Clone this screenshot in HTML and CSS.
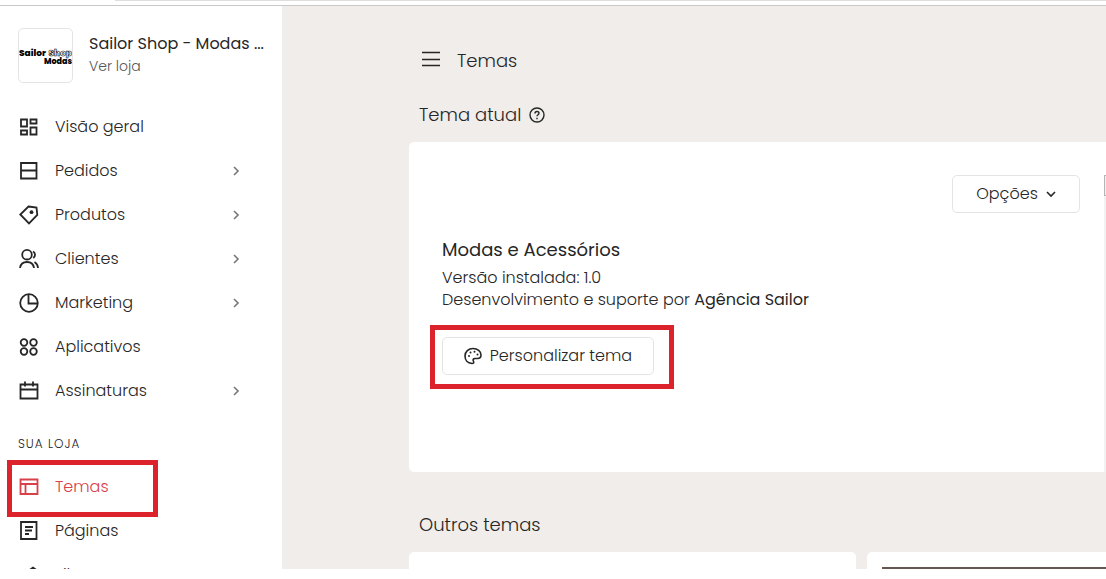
FILE: index.html
```html
<!DOCTYPE html>
<html lang="pt-BR">

<head>
  <meta charset="utf-8">
  <title>Temas</title>
  <link rel="stylesheet" href="styles.css">
</head>

<body>
  <div class="topbar"></div>
  <div class="page">
    <!-- menu lateral -->
    <aside class="sidebar">
      <div class="store">
        <svg class="store-logo" viewBox="0 0 53 53" role="img" aria-label="Sailor Shop Modas">
          <text x="0" y="27" class="logo-text">Sailor</text>
          <text x="53" y="27" class="logo-text logo-outline logo-end">Shop</text>
          <text x="53" y="35" class="logo-text logo-small logo-end">Modas</text>
        </svg>
        <div class="store-info">
          <div class="store-name">Sailor Shop - Modas ...</div>
          <a class="store-link" href="#">Ver loja</a>
        </div>
      </div>

      <nav class="menu">
        <a class="item" href="#">
          <svg class="icon" viewBox="0 0 20 20"><path d="M2 2.500h6v7H2zM11.500 2.500h6v4h-6zM2 13.500h6v4H2zM11.500 10.500h6v7h-6z"/></svg>
          <span>Visão geral</span>
        </a>
        <a class="item" href="#">
          <svg class="icon" viewBox="0 0 20 20"><path d="M2 2h15.500v15.500H2zM2 9.500h15.500"/></svg>
          <span>Pedidos</span>
          <svg class="arrow" viewBox="0 0 10 10"><path d="M3 1l4 4-4 4"/></svg>
        </a>
        <a class="item" href="#">
          <svg class="icon" viewBox="0 0 20 20"><path d="M9.500 1.500L17.500 2.500l.8 7.500-8.300 8.500-8.700-9z"/><circle class="dot" cx="12.500" cy="7.200" r="1.900"/></svg>
          <span>Produtos</span>
          <svg class="arrow" viewBox="0 0 10 10"><path d="M3 1l4 4-4 4"/></svg>
        </a>
        <a class="item" href="#">
          <svg class="icon" viewBox="0 0 20 20"><circle cx="8" cy="5.700" r="4.800"/><path d="M1 19c.6-4.500 3.300-6 7-6s6.400 1.500 7 6M14 2.500c2.500 1.300 2.800 4.600.3 6.500M15.500 13c2 1.200 3.300 3 3.500 6"/></svg>
          <span>Clientes</span>
          <svg class="arrow" viewBox="0 0 10 10"><path d="M3 1l4 4-4 4"/></svg>
        </a>
        <a class="item" href="#">
          <svg class="icon" viewBox="0 0 20 20"><circle cx="10" cy="10" r="8.800"/><path d="M9.500 1v9.500H19"/></svg>
          <span>Marketing</span>
          <svg class="arrow" viewBox="0 0 10 10"><path d="M3 1l4 4-4 4"/></svg>
        </a>
        <a class="item" href="#">
          <svg class="icon" viewBox="0 0 20 20"><circle cx="5" cy="5.500" r="3.300"/><circle cx="14.500" cy="5.500" r="3.300"/><circle cx="5" cy="14.500" r="3.300"/><circle cx="14.500" cy="14.500" r="3.300"/></svg>
          <span>Aplicativos</span>
        </a>
        <a class="item" href="#">
          <svg class="icon" viewBox="0 0 20 20"><path d="M1.500 3.500h17v14h-17zM1.500 8.500h17M6 .5v5M14 .5v5"/></svg>
          <span>Assinaturas</span>
          <svg class="arrow" viewBox="0 0 10 10"><path d="M3 1l4 4-4 4"/></svg>
        </a>
      </nav>

      <h2 class="menu-title">SUA LOJA</h2>
      <nav class="menu">
        <a class="item active" href="#">
          <svg class="icon" viewBox="0 0 20 20"><path d="M1.500 2.500h17v14.500h-17zM1.500 7h17M6.500 7v10"/></svg>
          <span>Temas</span>
        </a>
        <a class="item" href="#">
          <svg class="icon" viewBox="0 0 20 20"><path d="M2 1h15.500v17H2zM6 6h8M6 9.500h7M6 13h4"/></svg>
          <span>Páginas</span>
        </a>
        <a class="item" href="#">
          <svg class="icon" viewBox="0 0 20 20"><path d="M10 5.500l4-3 4 3L8 18H2v-5z"/></svg>
          <span>Filtros</span>
        </a>
      </nav>
    </aside>

    <!-- conteúdo -->
    <main class="content">
      <header class="header">
        <button class="menu-button" type="button" aria-label="Menu">
          <svg viewBox="0 0 18 18"><path d="M0 2.500h18M0 9.500h18M0 15.500h18"/></svg>
        </button>
        <h1 class="title">Temas</h1>
      </header>

      <h2 class="section-title">Tema atual
        <svg class="help" viewBox="0 0 16 16"><circle cx="8" cy="8" r="7"/><path d="M6 6.500c0-2.700 4-2.700 4-.2C10 7.700 8 7.700 8 9.300M8 10.800v1.400"/></svg>
      </h2>
      <div class="current-row">
        <section class="card current">
          <button class="button options" type="button">Opções
            <svg class="chevron" viewBox="0 0 10 10"><path d="M1 3l4 4 4-4"/></svg>
          </button>
          <h3 class="theme-name">Modas e Acessórios</h3>
          <p class="theme-text">Versão instalada: 1.0</p>
          <p class="theme-text">Desenvolvimento e suporte por <strong>Agência Sailor</strong></p>
          <div class="highlight">
            <button class="button customize" type="button">
              <svg class="palette" viewBox="0 0 18 18"><path d="M8 16.500C3.500 16.200 1 13 1 9c0-4.500 3.500-7.500 8-7.500s8 2.800 8 6.500c0 2.500-1.500 3.500-3.500 3.500H11c-2 0-2.300 1.500-1.500 2.800.6 1 .2 2.200-1.500 2.200z"/><circle class="dot" cx="5" cy="9" r="1"/><circle class="dot" cx="6.500" cy="5.500" r="1"/><circle class="dot" cx="10.500" cy="4.800" r="1"/><circle class="dot" cx="13.500" cy="7.500" r="1"/></svg>
              Personalizar tema
            </button>
          </div>
        </section>
        <div class="mockup"><div class="mockup-image"></div></div>
      </div>

      <h2 class="section-title others">Outros temas</h2>
      <div class="themes">
        <div class="card"></div>
        <div class="card"><div class="preview"></div></div>
      </div>
    </main>
  </div>
</body>

</html>
```
FILE: styles.css
```css
*,
*::after {
  box-sizing: border-box;
}

body {
  margin: 0;
  height: 100vh;
  padding-bottom: 10px;
  display: flex;
  flex-direction: column;
  overflow: hidden;
  background: #fff;
  color: #262626;
  font-family: Poppins, Inter, sans-serif;
  font-size: 16px;
  font-weight: 300;
  line-height: 22px;
}

h1, h2, h3, p {
  margin: 0;
  font-weight: 300;
}

a {
  color: inherit;
  text-decoration: none;
}

svg {
  flex: none;
  fill: none;
  stroke: currentColor;
  stroke-width: 1.6;
}

.dot {
  fill: currentColor;
  stroke: none;
}

.topbar {
  flex: none;
  height: 6px;
  border-bottom: 1px solid #c8c8c8;
  background: linear-gradient(#dedede, #dedede) 115px 0 / 100% 1px no-repeat;
}

.page {
  flex: 1;
  min-height: 0;
  display: flex;
  overflow: hidden;
}

/* menu lateral */
.sidebar {
  flex: none;
  width: 282px;
  padding: 22px 18px 0;
}

.store {
  display: flex;
  gap: 16px;
  margin-bottom: 22px;
}

.store-logo {
  width: 55px;
  height: 55px;
  border: 1px solid #e4e4e4;
  border-radius: 5px;
}

.logo-text {
  fill: #000;
  stroke: none;
  font-size: 9px;
  font-weight: 800;
}

.logo-small {
  font-size: 8px;
}

.logo-outline {
  fill: #fff;
  stroke: #000;
  stroke-width: 0.6;
}

.logo-end {
  text-anchor: end;
}

.store-info {
  min-width: 0;
  padding-top: 5px;
}

.store-name {
  white-space: nowrap;
  font-weight: 400;
}

.store-link {
  font-size: 14px;
  color: #555;
}

.item {
  display: flex;
  align-items: center;
  gap: 16px;
  height: 44px;
  padding-left: 1px;
}

.icon {
  width: 20px;
  height: 20px;
  stroke-width: 1.8;
}

.arrow {
  width: 10px;
  height: 10px;
  margin-left: auto;
  margin-right: 23px;
  color: #777;
}

.menu-title {
  padding-top: 20px;
  font-size: 12px;
  line-height: 22px;
  letter-spacing: 1px;
  margin-bottom: 10px;
}

.active {
  position: relative;
  color: #d8404a;
}

/* destaque em vermelho */
.active::after,
.highlight::after {
  content: "";
  position: absolute;
  border: 5px solid #dc232c;
  pointer-events: none;
}

.active::after {
  top: -5px;
  left: -11px;
  width: 151px;
  height: 57px;
}

/* conteúdo */
.content {
  flex: 1;
  min-width: 0;
  padding: 44px 0 0 127px;
  background: #f0edea;
}

.header {
  display: flex;
  align-items: flex-start;
  gap: 17px;
  padding-left: 13px;
}

.menu-button {
  display: flex;
  padding: 0;
  border: none;
  background: none;
  color: inherit;
}

.menu-button svg {
  width: 18px;
  height: 18px;
}

.title {
  font-size: 18px;
}

.section-title {
  display: flex;
  align-items: center;
  gap: 8px;
  margin-top: 32px;
  padding-left: 10px;
  font-size: 18px;
}

.help {
  width: 16px;
  height: 16px;
  stroke-width: 1.4;
}

.card {
  background: #fff;
  border-radius: 5px;
}

.current-row {
  display: flex;
  height: 330px;
  margin-top: 16px;
}

.current {
  flex: 1;
  display: flex;
  flex-direction: column;
  padding: 33px 24px 0 33px;
  border-radius: 5px 0 0 5px;
}

/* borda da imagem do tema, cortada na margem direita */
.mockup {
  width: 2px;
  padding-top: 33px;
  overflow: hidden;
  background: linear-gradient(#fff 33px, #f2f2f2 33px);
}

.mockup-image {
  width: 20px;
  height: 21px;
  border: 1px solid #b5b5b5;
}

.button {
  display: flex;
  align-items: center;
  justify-content: center;
  gap: 8px;
  height: 38px;
  padding: 0 16px;
  border: 1px solid #e4e4e4;
  border-radius: 5px;
  background: #fff;
  color: inherit;
  font: inherit;
  white-space: nowrap;
}

.options {
  width: 128px;
  align-self: flex-end;
}

.chevron {
  width: 10px;
  height: 10px;
}

.theme-name {
  margin: 26px 0 6px;
  font-size: 18px;
  font-weight: 400;
}

strong {
  font-weight: 400;
}

.highlight {
  position: relative;
  align-self: flex-start;
  margin-top: 26px;
}

.customize {
  width: 212px;
}

.highlight::after {
  top: -12px;
  left: -12px;
  width: 244px;
  height: 64px;
}

.palette {
  width: 18px;
  height: 18px;
}

.others {
  margin-top: 42px;
}

.themes {
  display: grid;
  grid-template-columns: 447px 447px;
  gap: 11px;
  margin-top: 16px;
}

.themes .card {
  height: 200px;
  padding: 15px;
}

.preview {
  height: 170px;
  background: #655852;
}
```
